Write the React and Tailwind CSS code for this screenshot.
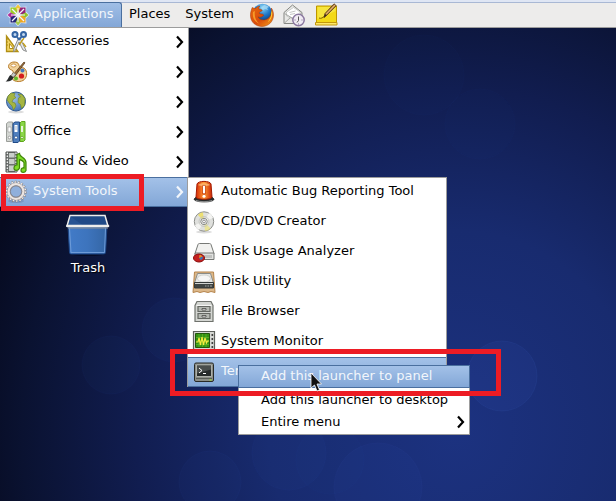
import React from "react";

function Icon({ children, className = "h-6 w-6" }) {
  return (
    <svg viewBox="0 0 24 24" className={`${className} shrink-0`} aria-hidden="true">
      {children}
    </svg>
  );
}

function DistroLogo() {
  return (
    <Icon>
      <path d="M12 .5l3 3.500 5.500-.5-.5 5 3.500 3.500-3.500 3.500.5 5-5.500-.5-3 3.500-3-3.500-5.500.5.5-5L.5 12 4 8.500l-.5-5L9 4z" fill="#d9e2f2" />
      <path d="M4.500 4.500h6.700v6.700H4.500z" fill="#9ccd2a" />
      <path d="M12.800 4.500h6.700v6.700h-6.700z" fill="#932279" />
      <path d="M4.500 12.800h6.700v6.700H4.500z" fill="#262577" />
      <path d="M12.800 12.800h6.700v6.700h-6.700z" fill="#efa724" />
      <path d="M12 1.500l2.500 3-2.500 5-2.500-5z" fill="#efc53a" />
      <path d="M22.500 12l-3 2.500-5-2.500 5-2.500z" fill="#8fc42a" />
      <path d="M12 22.500l-2.500-3 2.500-5 2.500 5z" fill="#a3c94a" />
      <path d="M1.500 12l3-2.500 5 2.500-5 2.500z" fill="#b0309a" />
      <path d="M6 6l12 12M18 6L6 18" stroke="#f4f4fa" strokeWidth="1.300" />
      <path d="M12 5v14M5 12h14" stroke="#f4f4fa" strokeWidth="1" />
    </Icon>
  );
}

function FirefoxIcon() {
  return (
    <Icon>
      <defs>
        <radialGradient id="fxGlobe" cx=".5" cy=".2" r=".8">
          <stop offset="0" stopColor="#8fd8f7" />
          <stop offset=".5" stopColor="#1e78c8" />
          <stop offset="1" stopColor="#0b2a66" />
        </radialGradient>
        <linearGradient id="fxTail" x1="0" y1="0" x2="1" y2="1">
          <stop offset="0" stopColor="#e66a10" />
          <stop offset=".55" stopColor="#d94b0b" />
          <stop offset="1" stopColor="#f5a11a" />
        </linearGradient>
      </defs>
      <circle cx="12.500" cy="10.500" r="9.800" fill="url(#fxGlobe)" />
      <path d="M14 2c2 0 4 1 5 2l-2 1 1 2-3-1-2 1-2-2z" fill="#a8dcf5" opacity=".75" />
      <path
        d="M2.200 4.500C1 8 .2 10 .5 13.500 1 19.500 6 23.500 12 23.500c6.500 0 11.500-5 11.500-11.500 0-3-1-5.500-2.200-7 .6 3 .4 4-.1 5.200C20.500 14.500 17 17 13.500 17c-3 0-4.800-1.500-5.500-3.200 1.500.8 3 .5 4.200-.3 1-.7 1.800-.8 1.300-1.700-.8-1.200-3-.3-4.300-1.500 0-1.200 1.300-1.800 3-2.500.2-1-1.500-1.700-3-1.600C8.500 5 9 4 10 3c-2 .3-3.300 1.200-4.200 2.300-1 0-2 0-3.600-.8z"
        fill="url(#fxTail)"
        stroke="#a63605"
        strokeWidth=".5"
      />
      <path d="M22 7c1 5-.5 9.500-4 12 1.500-3 3.500-5 3.200-9z" fill="#ffd83a" />
      <path d="M3 9c-1 6 2 10 6 11.500C5.500 17.500 4 13 5 8z" fill="#f79a28" />
    </Icon>
  );
}

function MailIcon() {
  return (
    <Icon>
      <path d="M2 9.500L10.500 2 20 9.500v11H2z" fill="#e9e9e7" stroke="#858783" />
      <path d="M4.500 9l7-4.500 6.500 4.500v4l-7 3-6.500-3z" fill="#fff" stroke="#b9bbb7" strokeWidth=".7" />
      <path d="M2.500 10.500l8.500 5 8.500-5M2.500 20l6-5.500" fill="none" stroke="#a3a5a1" />
      <path d="M7.500 9.500l6-1.500M8 11.500l5-1" stroke="#b5b7b5" strokeWidth=".8" />
      <circle cx="16.500" cy="17" r="5.700" fill="#f1ecf4" stroke="#8b78a0" strokeWidth="1.500" />
      <path d="M16.500 13.500v4l-1.500 2" fill="none" stroke="#555" />
      <path d="M12.500 17h1M19.500 17h1M16.500 20.500v1" stroke="#7d6b92" />
    </Icon>
  );
}

function NoteIcon() {
  return (
    <Icon>
      <path d="M2.500 3h20v17h-20z" fill="#f3d916" stroke="#bd9700" />
      <path d="M3.500 4h18v4l-18 8z" fill="#f8e748" opacity=".8" />
      <path d="M1.500 19.500h21.500v2.500H1.500z" fill="#ffe96a" stroke="#c3970a" />
      <path d="M5 15c2 1 4-.5 5-1.500" fill="none" stroke="#7e6500" />
      <path d="M10 14.500l1-4L20 .8l2.300 2L13 12z" fill="#b7813c" stroke="#54391d" strokeWidth=".8" />
      <path d="M12.300 11L21 2" stroke="#f0c98a" strokeWidth=".8" />
      <path d="M10 14.500l1-3.500 1.700 1.500z" fill="#3b2a1a" />
    </Icon>
  );
}

function AccessoriesIcon() {
  return (
    <Icon>
      <path d="M2.500 6v15.500H14z" fill="#f2d462" stroke="#b18f14" strokeWidth="1.300" />
      <path d="M5.500 13.500v5h4z" fill="#fff" stroke="#b18f14" />
      <path d="M2.500 9h2M2.500 12h1.500M2.500 15h1.500" stroke="#a07e08" strokeWidth=".8" />
      <path d="M14.500 8l1.500 0 6.500 13.500-3.500-1.500-4-8-3.500 8-2 2 .5-4z" fill="#e6e8e7" stroke="#828583" strokeWidth=".9" />
      <path d="M20 8l-5 7M19 13l3 4" stroke="#c19d1a" strokeWidth="1.300" />
      <circle cx="11" cy="4.500" r="2.500" fill="#c3d8ef" stroke="#3465a4" strokeWidth="2" />
      <circle cx="19.500" cy="4.500" r="2.500" fill="#c3d8ef" stroke="#3465a4" strokeWidth="2" />
      <path d="M13 7l2 2.500L17.500 7" fill="none" stroke="#3465a4" strokeWidth="1.800" />
    </Icon>
  );
}

function GraphicsIcon() {
  return (
    <Icon>
      <path
        d="M13 2.500C9 1 4.500 3 4.500 6.500c0 3 3 3 4.500 4.500s-2.500 4-1 7.500c1.500 3 7 4 11 2 4-2.300 4.500-7.500 2.500-11C20 7 17 8 15.500 6.500 14.500 5 15 3.500 13 2.500z"
        fill="#f1d29b"
        stroke="#b67a28"
      />
      <ellipse cx="9.500" cy="5.500" rx="2.500" ry="1.500" fill="#fff" stroke="#c58632" strokeWidth=".8" />
      <circle cx="18.500" cy="10.500" r="2" fill="#4679bd" />
      <circle cx="17.500" cy="16" r="2.600" fill="#d41c1c" />
      <circle cx="12" cy="18.500" r="2" fill="#5fbb28" />
      <path d="M8 16L20 2l1 .8L10 17.500z" fill="#9b6d36" stroke="#4d3114" strokeWidth=".7" />
      <path d="M9.500 12.500l2.500 2-3 3-2-2z" fill="#c9ccca" stroke="#656765" strokeWidth=".6" />
      <path d="M1.500 21.500C4 20.500 4 17 6.500 15l3 2.500c-1 3-4 4.500-8 4z" fill="#292c2d" />
    </Icon>
  );
}

function InternetIcon() {
  return (
    <Icon>
      <defs>
        <radialGradient id="earth" cx=".35" cy=".3" r=".8">
          <stop offset="0" stopColor="#a3c2e5" />
          <stop offset="1" stopColor="#396eb3" />
        </radialGradient>
      </defs>
      <ellipse cx="12" cy="22" rx="8" ry="1.500" fill="#ddd" />
      <circle cx="12" cy="11.500" r="9.500" fill="url(#earth)" stroke="#315b91" />
      <path d="M4 6l3-3 4 .5-1 2.500 2 1.500-3 2-1 2.500 3 1 1 3-2.500 4-1.500-4-2.500-2.500L3 10z" fill="#a5b541" stroke="#718522" strokeWidth=".6" />
      <path d="M14 4l4 .5 3 4-.5 7-3 3-1-4-2.500-2L14.500 8l2-1z" fill="#a5b541" stroke="#718522" strokeWidth=".6" />
    </Icon>
  );
}

function OfficeIcon() {
  return (
    <Icon>
      <path d="M2.500 3.500l2-1.500h4v18l-1 1.500h-5z" fill="#d3d6d2" stroke="#9a9d99" />
      <path d="M4 7h3v5H4z" fill="#fff" stroke="#999" strokeWidth=".6" />
      <path d="M16 3l1.500-1.500H21V20l-1.500 1.500H16z" fill="#8ad648" stroke="#5fa51c" />
      <path d="M17 6h2v6h-2z" fill="#e9f5df" />
      <path d="M9 3.500l2-1.500h4.500v19L14 22.500H9z" fill="#4f7fbd" stroke="#204a87" />
      <path d="M10.500 5h3v7h-3z" fill="#fff" />
      <path d="M11 7h2M11 9h2" stroke="#8298b5" strokeWidth=".7" />
      <circle cx="5.500" cy="17.500" r="1.300" fill="#fff" stroke="#888" strokeWidth=".7" />
      <circle cx="12" cy="17.500" r="1.500" fill="#fff" stroke="#204a87" strokeWidth=".7" />
      <circle cx="18" cy="17.500" r="1.200" fill="#fff" stroke="#4e9a06" strokeWidth=".7" />
    </Icon>
  );
}

function MediaIcon() {
  return (
    <Icon>
      <path d="M2 2h11v20H2z" fill="#6d716f" stroke="#4b4e4c" />
      <path d="M5 3h5.500v4.500H5zM5 9h5.500v5H5zM5 15.500h5.500V21H5z" fill="#c9ceca" />
      <path d="M3.300 2.500v19M12 2.500v19" stroke="#fff" strokeWidth="1.200" strokeDasharray="1.500 1.500" />
      <path
        d="M13 4.500l2.500-1c0 4 6.500 3.500 6.500 9v8c-1 2.500-5 2.500-5 0 0-2 1.500-3 3-2.500v-5.500c-1-2-3-2.500-4.500-3V18c-1 3-5.500 3-5.500.3 0-2.300 1.500-3.300 3-3.300z"
        fill="#7fdc28"
        stroke="#3f8607"
        strokeWidth="1.200"
      />
    </Icon>
  );
}

function GearIcon() {
  return (
    <Icon>
      <ellipse cx="12" cy="21" rx="8" ry="2" fill="#667ba0" opacity=".4" />
      <circle cx="12" cy="11.500" r="9.200" fill="none" stroke="#807a78" strokeWidth="3" strokeDasharray="1.900 1.312" />
      <circle cx="12" cy="11.500" r="9.200" fill="none" stroke="#f0ebe9" strokeWidth="2" strokeDasharray="1.500 1.712" />
      <circle cx="12" cy="11.500" r="7.300" fill="none" stroke="#9a8f8b" strokeWidth="3.200" />
      <circle cx="12" cy="11.500" r="7.400" fill="none" stroke="#ebe5e2" strokeWidth="2.200" />
      <circle cx="12" cy="11.500" r="5.600" fill="#90afdb" stroke="#7d7b81" strokeWidth=".8" />
    </Icon>
  );
}

function SirenIcon() {
  return (
    <Icon>
      <defs>
        <linearGradient id="siren" x1="0" x2="1">
          <stop offset="0" stopColor="#d52a06" />
          <stop offset=".5" stopColor="#ff9b35" />
          <stop offset="1" stopColor="#c92405" />
        </linearGradient>
      </defs>
      <path d="M2 19l2-2h16l2 2c.5 4-20 4-20 0z" fill="#292b2b" stroke="#111" strokeWidth=".6" />
      <path d="M4 17L5 4c1-3.500 13-3.500 14 0l1 13c0 3-16 3-16 0z" fill="url(#siren)" stroke="#a51c02" />
      <path d="M6 5c2-2.500 10-2.500 12 0-2 1.500-10 1.500-12 0z" fill="#ffc681" opacity=".7" />
      <path d="M12 6.500v6.500" stroke="#c23a08" strokeWidth="3.600" strokeLinecap="round" />
      <path d="M12 6.500v6" stroke="#fff" strokeWidth="2.200" strokeLinecap="round" />
      <circle cx="12" cy="16.300" r="1.500" fill="#fff" />
      <path d="M4 20.500c4 1.500 12 1.500 16 0" fill="none" stroke="#b9bbbb" strokeWidth=".7" />
    </Icon>
  );
}

function DiscIcon() {
  return (
    <Icon>
      <ellipse cx="12" cy="22" rx="8" ry="1.500" fill="#ddd" />
      <circle cx="12" cy="11.500" r="9.700" fill="#dfe0dd" stroke="#8b8d89" />
      <path d="M12 11.500L6 5c2-2 3-2.500 5-2.500z" fill="#f1e04e" opacity=".75" />
      <path d="M12 11.500l1 9.500c3 0 4-1 5.500-2.500z" fill="#f0e46b" opacity=".6" />
      <path d="M12 11.500L21 8c-1-3-2-4-4-5z" fill="#f3f3f1" />
      <path d="M12 11.500L3 15c1 3 2 4 4 5z" fill="#f3f3f1" />
      <circle cx="12" cy="11.500" r="5" fill="none" stroke="#bfc0bd" strokeWidth=".8" />
      <circle cx="12" cy="11.500" r="3.200" fill="#eee" stroke="#8c8e8b" />
      <circle cx="12" cy="11.500" r="1.400" fill="#fff" stroke="#777" strokeWidth=".8" />
    </Icon>
  );
}

function DiskUsageIcon() {
  return (
    <Icon>
      <path d="M6 4.500q.3-1 1.500-1h10q1.200 0 1.500 1l3 9H3z" fill="#f1f1ef" stroke="#777976" />
      <path d="M3 13h19v6.500H3z" fill="#e0e1df" stroke="#777976" />
      <path d="M13 15v3M15 15v3M17 15v3M19 15v3" stroke="#8f918e" strokeWidth=".8" />
      <ellipse cx="7" cy="18" rx="5.500" ry="4" fill="#c42020" stroke="#8b0c0c" />
      <path d="M7 18l3.500-1.500c1 1.500 0 3-2 3.500z" fill="#3976bd" />
      <path d="M7 18l.5-3c1.500 0 2.500.7 3 1.500z" fill="#e8922a" />
    </Icon>
  );
}

function DiskUtilityIcon() {
  return (
    <Icon>
      <path d="M2.500 2h19l1.500 20.500-4-1-3 1-4-1-4 1-3-1-4 1z" fill="#dcb88a" stroke="#b5844c" />
      <path d="M5.500 3.500h13L21.500 13h-19z" fill="#e6e7e4" stroke="#8a8c88" />
      <ellipse cx="12" cy="8.500" rx="6.500" ry="3.500" fill="#f6f6f5" stroke="#c5c7c3" strokeWidth=".7" />
      <path d="M2.500 12.500h19V18h-19z" fill="#414543" stroke="#353938" />
      <path d="M3 13.500h18" stroke="#d1d3d0" />
      <path d="M13 16h1.500M15.500 16H17M18 16h2" stroke="#a0a39f" />
    </Icon>
  );
}

function CabinetIcon() {
  return (
    <Icon>
      <path d="M5 1.500h14l2 4v16H3v-16z" fill="#d4d6d2" stroke="#6f726d" strokeWidth="1.200" />
      <path d="M4.500 5.500h15" stroke="#f6f6f4" />
      <path d="M6 6.500h12v5H6zM6 13.500h12v5H6z" fill="#b5b8b2" stroke="#656863" strokeWidth="1.200" />
      <path d="M10 8.500h4v1.500h-4zM10 15.500h4V17h-4z" fill="#fff" stroke="#464844" strokeWidth=".8" />
    </Icon>
  );
}

function MonitorIcon() {
  return (
    <Icon>
      <path d="M1.500 1.500h21v21h-21z" fill="#d7d9d5" stroke="#5e615c" strokeWidth="1.200" />
      <path d="M3.500 3.500h14v14h-14z" fill="#349313" stroke="#22570c" />
      <path d="M7 4v13M10.500 4v13M14 4v13M4 7.500h13M4 11h13M4 14.500h13" stroke="#69be2f" strokeWidth=".6" />
      <path d="M4 12h2l1-4 1.500 7L10 7l1.500 8L13 8l1.500 5 1-2H17" fill="none" stroke="#f7ea3e" strokeWidth="1.200" />
      <circle cx="20.300" cy="5" r="1" fill="#333" />
      <circle cx="20.300" cy="9" r="1" fill="#333" />
      <circle cx="20.300" cy="13" r="1" fill="#333" />
      <circle cx="20.300" cy="17" r="1" fill="#333" />
      <path d="M4 20h11" stroke="#6d706b" strokeDasharray="1 1" />
    </Icon>
  );
}

function TerminalIcon() {
  return (
    <Icon>
      <rect x="2.500" y="3" width="19" height="18.500" rx="1.500" fill="#8a8d87" stroke="#282a27" />
      <path d="M4.500 5h15v11.500h-15z" fill="#272b2b" stroke="#c1c4be" strokeWidth=".8" />
      <path d="M5 5.500h14v4l-14 4z" fill="#6b706e" opacity=".5" />
      <path d="M7 8l3 2.500L7 13M11 13.500h3" fill="none" stroke="#fff" strokeWidth="1" />
      <path d="M4 18.500h16" stroke="#4d504b" strokeWidth=".8" />
      <path d="M17.500 20h2" stroke="#9ce52f" strokeWidth="1.200" />
    </Icon>
  );
}

function TrashIcon() {
  return (
    <svg viewBox="0 0 44 42" className="h-[42px] w-11" aria-hidden="true">
      <defs>
        <linearGradient id="bin" x1="0" x2="1">
          <stop offset="0" stopColor="#427bc8" />
          <stop offset=".5" stopColor="#3d74bd" />
          <stop offset="1" stopColor="#3465a4" />
        </linearGradient>
      </defs>
      <ellipse cx="22" cy="40" rx="17" ry="2" fill="#02061a" opacity=".6" />
      <path d="M2 12l1.500 26.500c0 1 1 1.500 2 1.500h32c1 0 2-.5 2-1.500L41 12z" fill="url(#bin)" stroke="#1f4785" />
      <path d="M3.500 14L5 38.500h33.500L39.500 14" fill="none" stroke="#6d9bd8" />
      <path d="M4 1.500h35l3 10.500H1z" fill="#204a87" stroke="#eeeeec" strokeWidth="1.500" />
      <path d="M4.500 2.500l-2 8.500h14z" fill="#3465a4" opacity=".4" />
      <path d="M1.500 12h40.500" stroke="#eeeeec" strokeWidth="2.600" strokeLinecap="round" />
      <path d="M2 14h40" stroke="#8b8f96" />
    </svg>
  );
}

function Chevron() {
  return (
    <svg viewBox="0 0 8 14" className="h-[14px] w-2 shrink-0" aria-hidden="true">
      <path d="M1 1.500L6 7l-5 5.500" fill="none" stroke="currentColor" strokeWidth="2.200" />
    </svg>
  );
}

const HIGHLIGHT = "border-y border-[#4a6f9f] bg-linear-to-b from-[#a3c1e8] to-[#83a7d7] text-[#f2f6fb]";

function MenuItem({ icon, label, active, hasSubmenu }) {
  return (
    <button
      type="button"
      role="menuitem"
      className={`flex h-[30px] w-full items-center gap-1 pr-1 pl-1 text-left ${active ? HIGHLIGHT : ""}`}
    >
      {icon}
      <span className="flex-1 pb-0.5 pl-px">{label}</span>
      {hasSubmenu && <Chevron />}
    </button>
  );
}

const categories = [
  { label: "Accessories", icon: <AccessoriesIcon /> },
  { label: "Graphics", icon: <GraphicsIcon /> },
  { label: "Internet", icon: <InternetIcon /> },
  { label: "Office", icon: <OfficeIcon /> },
  { label: "Sound & Video", icon: <MediaIcon /> },
];

const tools = [
  { label: "Automatic Bug Reporting Tool", icon: <SirenIcon /> },
  { label: "CD/DVD Creator", icon: <DiscIcon /> },
  { label: "Disk Usage Analyzer", icon: <DiskUsageIcon /> },
  { label: "Disk Utility", icon: <DiskUtilityIcon /> },
  { label: "File Browser", icon: <CabinetIcon /> },
  { label: "System Monitor", icon: <MonitorIcon /> },
];

function ContextMenu() {
  return (
    <div role="menu" className="absolute top-2 left-[50px] w-[232px] border border-[#9c9c9c] bg-white text-black">
      <button type="button" role="menuitem" className={`-mx-px -mt-px flex h-[23px] w-[232px] items-center border-x pb-0.5 pl-[22px] ${HIGHLIGHT}`}>
        Add this launcher to panel
      </button>
      <button type="button" role="menuitem" className="flex h-[23px] w-full items-center pl-[22px]">
        Add this launcher to desktop
      </button>
      <button type="button" role="menuitem" className="flex h-[23px] w-full items-center justify-between pr-1 pb-0.5 pl-[22px]">
        Entire menu
        <Chevron />
      </button>
    </div>
  );
}

function ToolsMenu() {
  return (
    <ul role="menu" className="absolute top-0 left-[187px] w-[260px] border-x border-[#9c9c9c] bg-white text-black shadow-[inset_0_1px_0_#9c9c9c]">
      {tools.map((t) => (
        <li key={t.label}>
          <MenuItem {...t} />
        </li>
      ))}
      <li className="relative">
        <MenuItem label="Terminal" icon={<TerminalIcon />} active />
        <ContextMenu />
        <div className="pointer-events-none absolute -top-2 -left-[18px] h-[47px] w-[331px] border-5 border-[#ed1c24]" />
        <svg viewBox="0 0 12 20" className="absolute top-[15px] left-[122px] h-5 w-3" aria-hidden="true">
          <path d="M1 1v15l3.500-3 2.500 6 2.500-1-2.500-6h4.500z" fill="#111" stroke="#fff" strokeWidth=".8" />
        </svg>
      </li>
    </ul>
  );
}

function ApplicationsMenu() {
  return (
    <ul role="menu" className="absolute top-full left-0 z-10 w-[189px] border-r border-[#9c9c9c] bg-white text-black shadow-[inset_0_1px_0_#9c9c9c]">
      {categories.map((c) => (
        <li key={c.label}>
          <MenuItem {...c} hasSubmenu />
        </li>
      ))}
      <li className="relative">
        <MenuItem label="System Tools" icon={<GearIcon />} active hasSubmenu />
        <ToolsMenu />
        <div className="pointer-events-none absolute -top-[3px] left-px h-[37px] w-[143px] border-5 border-[#ed1c24]" />
      </li>
    </ul>
  );
}

function Wallpaper() {
  const bubbles = [
    [502, 376, 35, 0.07],
    [174, 330, 32, 0.03],
    [111, 365, 29, 0.03],
    [289, 453, 37, 0.03],
    [378, 487, 44, 0.04],
    [210, 482, 31, 0.03],
    [424, 75, 40, 0.02],
    [480, 124, 35, 0.02],
    [330, 460, 34, 0.02],
  ];
  return (
    <svg viewBox="0 0 616 501" preserveAspectRatio="xMidYMid slice" className="absolute inset-0 h-full w-full" aria-hidden="true">
      {bubbles.map(([x, y, r, o]) => (
        <circle key={`${x}-${y}`} cx={x} cy={y} r={r} fill="#4a70e0" stroke="#6a8cf0" fillOpacity={o} strokeOpacity={o} />
      ))}
    </svg>
  );
}

export default function App() {
  return (
    <div className="relative flex min-h-screen flex-col overflow-hidden bg-[radial-gradient(ellipse_80%_105%_at_74%_86%,#1c3280_0%,#182b6f_38%,#111d50_65%,#0a1231_88%,#060a1f_100%)] font-['DejaVu_Sans',sans-serif] text-[13px] leading-4">
      <Wallpaper />
      <header className="relative z-10 flex h-[27px] items-stretch border-t-2 border-[#dfe6f4] bg-[#edeceb] text-black">
        <nav className="flex items-stretch shadow-[inset_0_1px_0_#a9b8d4]">
          <div className="relative flex">
            <button type="button" className="flex w-[122px] items-center gap-1 rounded-tr-[3px] border-t border-r border-[#4a6f9f] bg-linear-to-b from-[#a0bee6] to-[#83a7d7] pl-1.5 text-[#f2f6fb]">
              <DistroLogo />
              <span className="pb-0.5">Applications</span>
            </button>
            <ApplicationsMenu />
          </div>
          <button type="button" className="px-[7px] pb-0.5">Places</button>
          <button type="button" className="px-2 pb-0.5">System</button>
        </nav>
        <div className="flex flex-1 items-center gap-2 pl-2 shadow-[inset_0_1px_0_#a9b8d4]">
          <button type="button" aria-label="Firefox"><FirefoxIcon /></button>
          <button type="button" aria-label="Mail"><MailIcon /></button>
          <button type="button" aria-label="Notes"><NoteIcon /></button>
        </div>
      </header>
      <main className="relative flex-1 border-t border-[#9c9c9c]">
        <button type="button" className="absolute top-[186px] left-[66px] flex flex-col items-center gap-1 text-white [text-shadow:1px_1px_1px_#000]">
          <TrashIcon />
          Trash
        </button>
      </main>
    </div>
  );
}
